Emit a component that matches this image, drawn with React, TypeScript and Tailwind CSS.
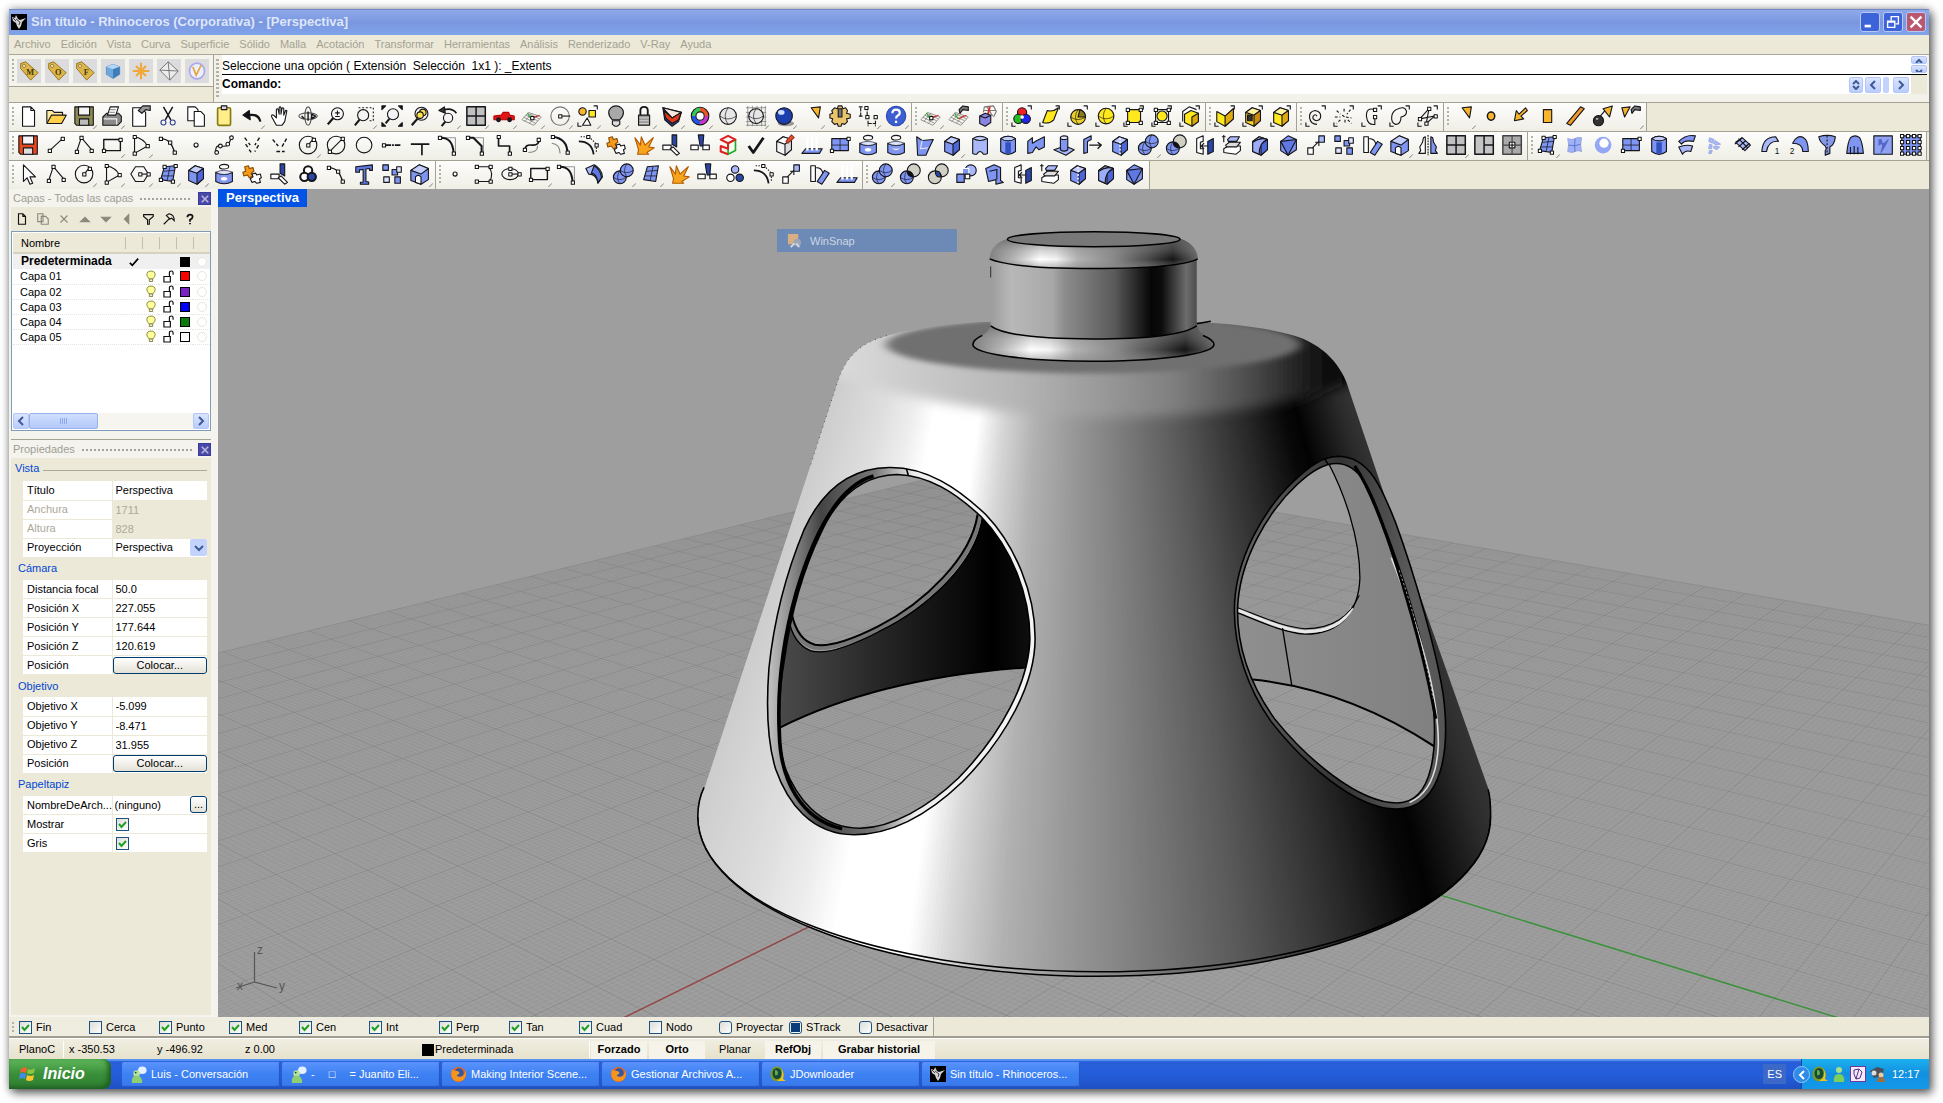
import React, { type ReactNode } from "react";

/* ---------- toolbar icons (24 x 24 boxes) ---------- */

const sq = (x: number, y: number, fill = "#fff") => (
  <rect key={`${x}-${y}`} x={x - 1.5} y={y - 1.5} width="3.5" height="3.5" fill={fill} stroke="#111" strokeWidth="1.1" />
);

const cube = (front: string, top: string, side: string) => (
  <>
    <path d="M4 8l7-5 9 3v11l-7 6-9-4z" fill={front} />
    <path d="M4 8l7-5 9 3-7 5z" fill={top} />
    <path d="M13 11l7-5v11l-7 6z" fill={side} />
  </>
);

const ball = (cx: number, cy: number, r: number, fill: string) => (
  <>
    <circle cx={cx} cy={cy} r={r} fill={fill} />
    <path d={`M${cx - r} ${cy}q${r} ${r * 0.7} ${r * 2} 0M${cx} ${cy - r}q${-r * 0.7} ${r} 0 ${r * 2}`} strokeWidth=".7" />
  </>
);

const corners = <path d="M18 1h4v4M1 19v4h4" />;
const BLUE = "#7f95f2";
const PALE = "#a9b8f8";
const NAVY = "#2c46a8";
const GOLD = "#f7b52c";
const YEL = "#ffe81c";

const lens = (
  <>
    <circle cx="13.5" cy="9.5" r="6.5" fill="#f7f7f7" />
    <path d="M9 14l-6 7" strokeWidth="2.4" />
  </>
);
const bluegrid = (
  <>
    <path d="M8 4l12-1-3 17-13-2z" fill={BLUE} />
    <path d="M14 4l-3 15M7 9l12-1M5 14l13 0" strokeWidth=".8" />
  </>
);
const floor = (
  <>
    <path d="M8 8l14 5-8 9-13-6zM5 11l13 6M12 9l-8 9M17 11l-8 9M3 13l13 7M7 9l13 6" stroke="#777" strokeWidth=".8" />
    <path d="M11 15l9-4" stroke="#d22" />
    <path d="M11 15l-4-6" stroke="#2a2" />
  </>
);
const hand = <path d="M12 5l4-4 6 1v4l-6-1-3 4z" fill="#777" />;
const cone = <path d="M11 3l10-1-2 12z" fill={GOLD} />;
const bowl = (
  <>
    <path d="M3 10v10q9 5 18 0V10q-9 5-18 0z" fill={BLUE} />
    <path d="M3 10q9-4 18 0-9 5-18 0" fill="#dfe5ff" strokeWidth=".7" />
    <ellipse cx="12" cy="4" rx="5" ry="2.5" fill="#fff" />
  </>
);

const ICONS: Record<string, ReactNode> = {
  Nuevo: <path d="M6 2h9l4 4v17H6zM15 2v4h4" fill="#fff" />,
  Abrir: (
    <>
      <path d="M2 19V6h6l2 2h9v4" fill="#ffe9a0" />
      <path d="M2 20l5-9h16l-5 9z" fill="#ffcf4a" />
    </>
  ),
  Guardar: (
    <>
      <path d="M2 2h20v20H4l-2-2z" fill="#8d8a52" />
      <path d="M6 2h12v9H6z" fill="#f4f4f4" />
      <path d="M7 15h10v7H7z" fill="#bbb" />
    </>
  ),
  GuardarRojo: (
    <>
      <path d="M2 2h20v20H4l-2-2z" fill="#e5491b" />
      <path d="M6 2h12v9H6z" fill="#f4f4f4" />
      <path d="M7 15h10v7H7z" fill="#ddd" />
    </>
  ),
  Imprimir: (
    <>
      <path d="M2 13l4-4h13l3 3v6l-4 4H2z" fill="#8a8a8a" />
      <path d="M7 11l3-9h9l-3 9z" fill="#fff" />
      <path d="M10 5h6M9 8h6" stroke="#999" />
      <path d="M3 15h14v6" stroke="#f0f0f0" />
    </>
  ),
  Propiedades: (
    <>
      <path d="M4 3h9l5 5v15H4z" fill="#fff" />
      <path d="M10 6l5-5h8v5l-5-1-4 4z" fill="#999" />
    </>
  ),
  Cortar: (
    <>
      <path d="M7 2l8 14M17 2L9 16" strokeWidth="1.6" />
      <circle cx="7" cy="19" r="2.7" stroke="#2c3f8f" />
      <circle cx="17" cy="19" r="2.7" stroke="#2c3f8f" />
    </>
  ),
  Copiar: (
    <>
      <path d="M3 2h8l3 3v12H3z" fill="#fff" />
      <path d="M10 7h7l4 4v12H10z" fill="#fff" />
    </>
  ),
  Pegar: (
    <>
      <rect x="5" y="3" width="14" height="19" rx="1.5" fill="#ffee8a" stroke="#8a7a10" strokeWidth="1.8" />
      <rect x="9" y="1" width="6" height="4" fill="#ddd" />
    </>
  ),
  Deshacer: (
    <>
      <path d="M21 18q-2-9-13-7" strokeWidth="2.4" />
      <path d="M9 6l-7 5 8 5z" fill="#111" />
    </>
  ),
  Encuadre: <path d="M8 22l-5-9q-1-3 2-2l3 3V5q1-2 2 0l1 5V3q1-2 2 0v7l1-6q1-2 2 0v7l2-5q2-1 1 2l-2 10-3 4z" fill="#fff" />,
  Rotar: (
    <>
      <ellipse cx="12" cy="12" rx="10" ry="3.5" stroke="#555" />
      <ellipse cx="12" cy="12" rx="3.5" ry="10" stroke="#555" />
      <path d="M12 7v10M16 10l4 2-4 3zM8 15l-3-3" strokeWidth="1.500" />
    </>
  ),
  Zoom: (
    <>
      {lens}
      <path d="M11 8.500h5M13.500 6v5M11 12.500h5" />
    </>
  ),
  ZoomVentana: (
    <>
      <path d="M6 3h16v14h-6" strokeDasharray="2 2" />
      <circle cx="11" cy="11" r="6" fill="#f4f4f4" />
      <path d="M7 16l-5 6" strokeWidth="2.2" />
    </>
  ),
  ZoomExtension: (
    <>
      <circle cx="13" cy="10" r="6" fill="#f4f4f4" />
      <path d="M9 15l-4 5" strokeWidth="2.2" />
      <path d="M1 1h4L1 5zM23 1v4l-4-4zM23 23h-4l4-4zM1 23v-4l4 4z" fill="#111" />
    </>
  ),
  ZoomSeleccion: (
    <>
      <circle cx="13.500" cy="9.500" r="7" fill="#f4f4f4" />
      <circle cx="15" cy="8" r="3.500" fill="#ffe14a" />
      <circle cx="12" cy="11" r="3.500" fill="#ffe14a" />
      <path d="M9 15l-6 7" strokeWidth="2.4" />
    </>
  ),
  ZoomPrevio: (
    <>
      <circle cx="12" cy="14" r="5" fill="#f4f4f4" />
      <path d="M9 18l-4 5" strokeWidth="2.2" />
      <path d="M21 9q-4-6-13-4" strokeWidth="1.800" />
      <path d="M8 2L2 6l7 3z" fill="#333" />
    </>
  ),
  CuatroVistas: (
    <>
      <rect x="2" y="2" width="20" height="20" fill="#c0c0c0" strokeWidth="1.600" />
      <path d="M12 2v20M2 12h20" strokeWidth="1.600" />
    </>
  ),
  TresVistas: (
    <>
      <rect x="2" y="2" width="20" height="20" fill="#c4c4c4" strokeWidth="1.600" />
      <path d="M12 2v20M12 12h10" strokeWidth="1.600" />
    </>
  ),
  PlanoVista: (
    <>
      <rect x="2" y="2" width="20" height="20" fill="#aaa" stroke="#444" strokeWidth="1.600" />
      <path d="M12 2v20M2 12h20" stroke="#444" />
      <rect x="9" y="9" width="6" height="6" fill="#fff" />
      <path d="M12 10v4M10 12h4" />
    </>
  ),
  Coche: (
    <>
      <path d="M1 16v-4l8-1 2-3h6l1 3 5 1v4z" fill="#e01818" stroke="#b00" />
      <circle cx="6" cy="16" r="2" fill="#222" />
      <circle cx="18" cy="16" r="2" fill="#222" />
    </>
  ),
  PlanoC: (
    <>
      {floor}
      {sq(12, 14)}
    </>
  ),
  PlanoMano: (
    <>
      {floor}
      {hand}
    </>
  ),
  PlanoCubo: (
    <>
      <path d="M9 2l10-1 3 6-3 6M12 2l6 10M9 6h12M9 2l-1 6" stroke="#777" />
      <path d="M15 2l-2 8" stroke="#d22" strokeWidth="2" />
      <path d="M4 12l6-3 6 2v8l-6 4-6-3z" fill="#8a86e0" />
      <path d="M4 12l6 2 6-3" />
    </>
  ),
  CirculoC: (
    <>
      <circle cx="12" cy="12" r="10" stroke="#777" />
      <path d="M12 12h11" />
      {sq(12, 12)}
    </>
  ),
  SeleccionObj: (
    <>
      <circle cx="6" cy="7" r="4" fill={GOLD} />
      <rect x="13" y="6" width="7" height="7" fill={YEL} />
      <path d="M11 14l4 8H6z" fill="#fff" />
      {corners}
    </>
  ),
  Bombilla: (
    <>
      <path d="M8 16q-4-4-4-8a8 7 0 0116 0q0 4-4 8z" fill="#a8a8a8" />
      <path d="M8 17h8v4l-3 2h-2l-3-2z" fill="#ddd" />
    </>
  ),
  Bloquear: (
    <>
      <path d="M8 11V6q0-4 4-4t4 4v5" strokeWidth="2" />
      <rect x="6" y="11" width="12" height="11" fill="#999" />
      <path d="M7 14h10M7 17h10M7 20h10" stroke="#e4e4e4" strokeWidth=".8" />
    </>
  ),
  Capas: (
    <>
      <path d="M2 3l20 5-3 10-7 5-8-7z" fill="#2c3f8f" />
      <path d="M2 3l20 5-10 6z" fill="#f9e9dc" />
      <path d="M3 6l9 8 10-6-3 8-7 4-7-6z" fill="#e33a1a" />
    </>
  ),
  Color: (
    <>
      <g strokeWidth="4.500">
        <path d="M12 5a7 7 0 017 7" stroke="#e52" />
        <path d="M19 12a7 7 0 01-7 7" stroke="#c3c" />
        <path d="M12 19a7 7 0 01-7-7" stroke="#25e" />
        <path d="M5 12a7 7 0 017-7" stroke="#3c5" />
      </g>
      <circle cx="12" cy="12" r="9.500" />
      <circle cx="12" cy="12" r="4.500" fill="#fff" />
    </>
  ),
  Esfera: ball(12, 12, 9, "#e6e6e6"),
  EsferaMalla: (
    <>
      <path d="M3 1v22M8 1v22M13 1v22M18 1v22M22 1v22M1 3h22M1 8h22M1 13h22M1 18h22M1 22h22" stroke="#777" strokeWidth=".8" />
      {ball(12, 12, 8, "#e6e6e6")}
    </>
  ),
  EsferaAzul: (
    <>
      <ellipse cx="14" cy="20" rx="9" ry="3" fill="#999" stroke="none" />
      <circle cx="12" cy="12" r="9" fill="#1d3fae" />
      <ellipse cx="9" cy="8" rx="3.500" ry="2.500" fill="#cfe0ff" stroke="none" />
    </>
  ),
  Foco: cone,
  Opciones: (
    <>
      <path d="M10 1h4l1 3 3-1 2 3-1 3 4 1v4l-4 1 1 3-3 3-3-1-1 3h-3l-1-3-3 1-3-3 1-3-3-1v-4l3-1-1-3 3-3 3 1z" fill="#e9c46a" />
      <rect x="10" y="4" width="4" height="9" fill="#777" />
    </>
  ),
  Cotas: (
    <>
      <path d="M4 3v9M2 2h5M2 12h5M12 20h8M12 17v6M20 17v6M11 2v10" strokeDasharray="4 1" />
      {[sq(10, 3), sq(11, 13), sq(20, 13)]}
    </>
  ),
  Ayuda: (
    <>
      <circle cx="12" cy="12" r="10.500" fill="#3c5ed2" stroke="#2a48ac" />
      <path d="M8 9q0-4 4-4t4 3.500q0 2-2 3t-2 3M12 17v2.500" stroke="#fff" strokeWidth="2.400" />
    </>
  ),
  RGB: (
    <>
      <circle cx="12" cy="8" r="5" fill="#e22" />
      <circle cx="8" cy="15" r="5" fill="#2b2" />
      <circle cx="16" cy="15" r="5" fill="#22e" />
      <circle cx="12" cy="13" r="2" fill="#fff" stroke="none" />
      {corners}
    </>
  ),
  SelSuperficie: (
    <>
      <path d="M9 6q6 2 12-3l-5 13q-5 5-12 3z" fill={YEL} />
      {corners}
    </>
  ),
  SelPoli: (
    <>
      {ball(12, 13, 8, "#ecd02a")}
      <path d="M12 13l2-8q6 2 6 8z" fill="#8a7a20" />
      {corners}
    </>
  ),
  SelEsfera: (
    <>
      {ball(12, 12, 8.500, YEL)}
      {corners}
    </>
  ),
  SelRect: (
    <>
      <rect x="5" y="5" width="14" height="14" fill={YEL} />
      {[sq(5, 5), sq(19, 5), sq(5, 19), sq(19, 19)]}
      {corners}
    </>
  ),
  SelCirculo: (
    <>
      <rect x="5" y="5" width="14" height="14" />
      <circle cx="12" cy="12" r="5.500" fill={YEL} />
      {[sq(5, 5), sq(19, 5), sq(5, 19), sq(19, 19)]}
      {corners}
    </>
  ),
  SelCaja: (
    <>
      <path d="M4 18V7l7-5 8 3" fill="#fff" />
      <path d="M6 10l7-4 8 3v9l-7 5-8-4z" fill={YEL} />
      <path d="M14 13l7-4v9l-7 5z" fill="#d9a80c" />
      {corners}
    </>
  ),
  Esquina: (
    <>
      <path d="M3 7l9 5 9-8v11l-9 8-9-5z" fill={YEL} />
      <path d="M12 12l9-8v11l-9 8z" fill="#e0ab10" />
      {corners}
    </>
  ),
  CajaAbierta: (
    <>
      {cube("#ffd62a", "#fff09a", "#c98a10")}
      <rect x="6" y="11" width="5" height="6" fill="#333" />
      {corners}
    </>
  ),
  CajaAmarilla: (
    <>
      {cube(YEL, "#fff7a0", "#e0ab10")}
      {corners}
    </>
  ),
  Espiral: (
    <>
      <path d="M13 12q-2-3-4 0t3 5q5 0 5-5t-6-6q-7 1-6 8t8 7" />
      {corners}
    </>
  ),
  Rayos: (
    <>
      <path d="M4 6l4 4M12 4v4M19 5l-4 5M2 13h6M14 13l6 1M8 16l-4 4M13 16v5M16 16l4 4M10 11l4 3" strokeDasharray="3 2" />
      {corners}
    </>
  ),
  CurvaAbierta: (
    <>
      <path d="M15 5Q5 2 6 13q1 9 9 8v-8" />
      {[sq(15, 5), sq(15, 13)]}
      {corners}
    </>
  ),
  CurvaCerrada: (
    <>
      <path d="M8 5q9-5 11 2 0 5-6 6 0 8-6 8-5-2-4-9 1-5 5-7z" />
      {corners}
    </>
  ),
  CurvaPuntos: (
    <>
      <path d="M3 15L13 4l-3 16 9-8-16 3" />
      {[sq(3, 15), sq(13, 4), sq(10, 20), sq(20, 12)]}
      {corners}
    </>
  ),
  LuzPunto: <ellipse cx="12" cy="12" rx="4" ry="4.500" fill={GOLD} strokeWidth="1.600" />,
  LuzDir: <path d="M19 3l2 3-7 6 3 3-10 2 2-11 3 4z" fill={GOLD} />,
  LuzRect: <rect x="8" y="5" width="9" height="14" fill={GOLD} />,
  LuzLineal: <path d="M3 20L18 2l4 2L7 22z" fill="#f09a2c" />,
  Bomba: (
    <>
      <circle cx="7" cy="17" r="5.500" fill="#333" />
      <circle cx="5.500" cy="15" r="1.300" fill="#aaa" stroke="none" />
      <path d="M9 12l5-6" />
      <path d="M12 4l10-3-3 12z" fill={GOLD} />
    </>
  ),
  FocoMano: (
    <>
      <path d="M2 3l9-1-6 11z" fill={GOLD} />
      {hand}
    </>
  ),
  Linea: (
    <>
      <path d="M5 18L19 5" />
      {[sq(5, 18), sq(19, 5)]}
    </>
  ),
  Polilinea: (
    <>
      <path d="M4 19L9 4l12 14" />
      {[sq(4, 19), sq(9, 4), sq(20, 18)]}
    </>
  ),
  Rectangulo: (
    <>
      <rect x="3" y="6" width="18" height="12" strokeWidth="1.500" />
      {[sq(3, 18), sq(21, 6)]}
    </>
  ),
  Sector: (
    <>
      <path d="M6 3v18l14-8M6 3q10 2 14 10" />
      {[sq(6, 3), sq(6, 21), sq(20, 13)]}
    </>
  ),
  Arco: (
    <>
      <path d="M4 5q11 0 15 15" strokeWidth="1.500" />
      {[sq(4, 5), sq(14, 9), sq(19, 20)]}
    </>
  ),
  Punto: <circle cx="12" cy="12" r="2.200" fill="#fff" />,
  CurvaInterp: (
    <>
      <path d="M3 20q-1-8 5-7t8-1 4-9" />
      <g fill="#fff">
        <circle cx="4" cy="20" r="2" />
        <circle cx="8" cy="13" r="2" />
        <circle cx="16" cy="11" r="2" />
        <circle cx="20" cy="4" r="2" />
      </g>
    </>
  ),
  CurvaRotaA: <path d="M4 4l6 8M20 4l-5 8M5 11l6 9M19 12l-4 7" strokeDasharray="4 3" strokeWidth="1.500" />,
  CurvaRotaB: <path d="M4 6l6 7M19 5l-5 9M8 19h9" strokeDasharray="4 2" strokeWidth="1.500" />,
  Circulo: (
    <>
      <circle cx="12" cy="12" r="9.500" />
      <path d="M12 12l5-6" />
      {[sq(12, 12), sq(18, 6)]}
    </>
  ),
  CirculoDiam: (
    <>
      <circle cx="12" cy="12" r="9.500" />
      <path d="M5 19L19 5" />
      {[sq(5, 19), sq(19, 5)]}
    </>
  ),
  Elipse: <circle cx="12" cy="12" r="8.500" />,
  ElipseEje: (
    <>
      <ellipse cx="11" cy="12" rx="9" ry="6" />
      <path d="M11 12h10" />
      {[sq(11, 12), sq(21, 12), sq(11, 6)]}
    </>
  ),
  Extender: (
    <>
      <path d="M3 12h18" strokeWidth="1.800" strokeDasharray="8 1 2 1" />
      {sq(3, 12)}
    </>
  ),
  Recortar: <path d="M2 11h20M14 11v12" strokeWidth="1.800" />,
  Empalme: (
    <>
      <path d="M3 4h17v17" stroke="#999" />
      <path d="M3 4q14-1 15 17" strokeWidth="2.200" />
      {[sq(3, 4), sq(18, 21)]}
    </>
  ),
  Chaflan: (
    <>
      <path d="M3 4h17v17" stroke="#999" />
      <path d="M3 4h6l9 9v8" strokeWidth="2.200" />
      {[sq(3, 4), sq(18, 21)]}
    </>
  ),
  Conectar: (
    <>
      <path d="M6 3v10h12v8" strokeWidth="1.800" />
      {[sq(6, 3), sq(18, 21)]}
    </>
  ),
  Mezclar: (
    <>
      <path d="M4 18q0-7 8-6t8-8" strokeWidth="1.800" />
      <path d="M8 20q10 0 10-7" stroke="#888" />
      {[sq(4, 17), sq(19, 6)]}
    </>
  ),
  Desfase: (
    <>
      <path d="M4 3q16 2 16 18" strokeWidth="2.200" />
      <path d="M3 10q9 1 9 11" stroke="#888" />
      {[sq(4, 3), sq(20, 20)]}
    </>
  ),
  Reconstruir: (
    <>
      <path d="M2 8q14 0 16 14" strokeWidth="2" />
      <path d="M4 3h9l8 8v9" strokeDasharray="1.500 1.500" />
      {[sq(12, 3), sq(21, 12)]}
    </>
  ),
  Explotar: (
    <>
      <path d="M4 4l4-1 1 3 4-1 1 4-3 2 2 3-4 2-2-3-4 1-1-4 3-1z" fill="#f39a1a" stroke="#8a4a00" />
      <path d="M12 12l4-1 1 2 4-1 1 4-2 1 1 4-4 1-2-2-3 1-2-4 3-2z" fill="#fff" />
    </>
  ),
  Detonar: <path d="M2 4l6 8 1-9 4 9 9-8-5 10 6 1-8 5 2 2H5l1-5z" fill="#f7a51c" stroke="#b45a00" />,
  Ajustar: (
    <>
      <path d="M2 12h9v5H2z" fill="#fff" />
      <path d="M12 1h5v13l-5-3z" fill={NAVY} />
      <path d="M13 14l7 7-3 2-7-7z" fill="#fff" />
    </>
  ),
  Partir: (
    <>
      <path d="M2 12h8v5H2zM15 12h7v5h-7z" fill="#fff" />
      <path d="M10 1h6l-1 12h-3z" fill={NAVY} />
    </>
  ),
  CajaRoja: (
    <>
      <path d="M20 6v12l-8 4V10z" stroke="#2a2" strokeWidth="1.800" fill="#f4fff4" />
      <path d="M12 10L4 6l8-4 8 4-8 4v6l-8-3v6l8 3" stroke="#d22" strokeWidth="2.200" />
    </>
  ),
  Comprobar: <path d="M4 13l5 7L20 4" strokeWidth="3" />,
  CajaLapiz: (
    <>
      {cube("#f4f4f4", "#fff", "#ddd")}
      <path d="M14 8l6-7 3 3-7 6z" fill="#e2521a" stroke="#933" />
    </>
  ),
  Proyeccion: (
    <>
      <path d="M5 16h18l-3 5H1z" fill={BLUE} />
      <path d="M7 3v15M12 3v15M17 3v15" stroke="#fff" strokeWidth="2.500" />
    </>
  ),
  SuperficiePuntos: (
    <>
      <rect x="3" y="5" width="18" height="13" fill={BLUE} />
      <path d="M12 5v13M3 12h18" strokeWidth=".8" />
      {[sq(3, 18), sq(21, 5)]}
    </>
  ),
  Revolucion: (
    <>
      {bowl}
      <ellipse cx="12" cy="17" rx="4" ry="2.500" fill="#fff" stroke="#8a9bea" />
    </>
  ),
  Tazon: (
    <>
      {bowl}
      <path d="M5 14q7 8 14 0-7 3-14 0" fill="#fff" stroke="#8a9bea" />
    </>
  ),
  Plegado: (
    <>
      <path d="M4 3l6 4 12-1-4 8-4 9H5z" fill={BLUE} />
      <path d="M10 7l-2 9 8-1" stroke="#dfe5ff" />
    </>
  ),
  Cubo: cube(BLUE, "#c3cefc", "#4c66d8"),
  CuboSeccion: (
    <>
      {cube(BLUE, "#c3cefc", "#4c66d8")}
      <path d="M12 4v18" stroke="#fff" strokeDasharray="2 2" strokeWidth="1.500" />
    </>
  ),
  CuboEmpalme: (
    <>
      {cube(BLUE, "#c3cefc", "#4c66d8")}
      <path d="M4 19V9q8-6 16-3-9 3-9 16z" fill="#9cadf7" />
    </>
  ),
  Prisma: (
    <>
      <path d="M4 8l8-6 9 4v11l-9 6-8-5z" fill={BLUE} />
      <path d="M4 8l8 15 9-17z" fill="#6078e4" />
    </>
  ),
  Cilindro: (
    <>
      <path d="M4 5q8-5 16 0v16q-4 2-5 0-3-4-6 0-1 2-5 0z" fill={PALE} />
      <path d="M4 5q8 4 16 0" fill="#dfe5ff" />
    </>
  ),
  CilindroB: (
    <>
      <path d="M4 5q8-5 16 0v14q-8 6-16 0z" fill={BLUE} />
      <path d="M4 5q8 5 16 0-8-5-16 0" fill="#c3cefc" />
      <path d="M9 9v12h6V9z" fill="#3350c0" stroke="none" />
    </>
  ),
  Onda: <path d="M3 8l5-4v6l5-3 8-4v11l-6 3-3-3-4 6-5 1z" fill={BLUE} />,
  Sombrero: (
    <>
      <path d="M1 17l12-4 10 4-9 6z" fill={PALE} />
      <path d="M8 4v13q4 3 8 0V4" fill={BLUE} />
      <ellipse cx="12" cy="4" rx="4" ry="2" fill="#dfe5ff" />
    </>
  ),
  Puerta: (
    <>
      <path d="M3 21V6l8-4v4l-4 2v12z" fill={BLUE} />
      <path d="M9 12h13M18 9l4 3-4 4" strokeWidth="1.400" />
    </>
  ),
  Union: (
    <>
      {ball(8.500, 15.500, 7, BLUE)}
      {ball(16, 8, 7, BLUE)}
    </>
  ),
  Diferencia: (
    <>
      <circle cx="16" cy="8" r="7" fill="#cfcfc4" />
      {ball(8.500, 15.500, 7, BLUE)}
      <path d="M9 9q0 6 6.500 6-1-6-6.500-6" fill="#111" />
    </>
  ),
  Interseccion: (
    <>
      <circle cx="16" cy="8" r="7" fill="#cfcfc4" />
      <circle cx="8.500" cy="15.500" r="7" fill="#cfcfc4" />
      <path d="M9 9q6-1 6 6-6 1-6-6" fill={NAVY} />
    </>
  ),
  Division: (
    <>
      <circle cx="17" cy="8" r="6" fill={PALE} />
      <path d="M8 6h7v8H8z" fill={BLUE} stroke="#fff" />
      <path d="M2 12h8v9H2z" fill={BLUE} />
      <path d="M11 12h5v5h-5z" fill="#fff" />
    </>
  ),
  Vaciado: (
    <>
      <path d="M3 6l9-4 7 3v14l3 2-8 2v-5l-8 2z" fill={BLUE} />
      <path d="M7 9l8-2v11" />
    </>
  ),
  Tope: (
    <>
      <path d="M4 20V5l7-3v6l-3 1v7h3v6z" fill="#fff" />
      <path d="M16 8l6-3v14l-6 3z" fill={NAVY} />
      <path d="M16 13h-7M12 10l-3 3 3 3" />
    </>
  ),
  Hojas: (
    <>
      <path d="M3 16l5-3h13v5l-5 4-13-2z" fill="#fff" />
      <path d="M5 12l4-3h12l-4 5H6z" fill="#ddd" />
      <path d="M7 6l3-3h10l-3 5H8z" fill={PALE} />
      <path d="M3 1v8M1 3h4" />
    </>
  ),
  Mover: (
    <>
      <rect x="3" y="15" width="6" height="7" fill="#fff" />
      <rect x="15" y="2" width="6" height="7" fill={PALE} />
      <path d="M8 15l7-7M11 9h4v4" />
    </>
  ),
  Matriz: (
    <>
      <path d="M2 2h6v6H2zM12 7h6v6h-6zM15 15h6v7h-6z" fill={BLUE} />
      <path d="M3 15h6v6H3zM17 4h5v6h-5z" fill="#dfe5ff" />
    </>
  ),
  Girar: (
    <>
      <path d="M3 3h5v17H3z" fill="#fff" />
      <path d="M18 8l5 3-8 12-5-3z" fill={BLUE} />
      <path d="M9 5q6 0 7 6" />
    </>
  ),
  Jaula: (
    <>
      <path d="M2 8l9-6 10 4v12l-8 5-11-4z" fill={BLUE} />
      <path d="M2 8l9-6 10 4-8 6z" fill="#c3cefc" />
      <path d="M7 21v-6q3-3 6 0v8z" fill="#fff" />
    </>
  ),
  Simetria: (
    <>
      <path d="M9 3v18H2l2-3-1-4 3-5 1-5z" fill="#fff" />
      <path d="M15 3v18h7l-2-3 1-4-3-5-1-5z" fill={BLUE} />
      <path d="M12 1v22" strokeDasharray="2 1" />
    </>
  ),
  Parche: (
    <>
      {bluegrid}
      {[sq(8, 4), sq(20, 3), sq(4, 18), sq(17, 20)]}
    </>
  ),
  Malla: bluegrid,
  Almohada: (
    <g stroke="#8797dc" strokeWidth=".8">
      <path d="M4 5q5 2 8 0t7-1q-2 8 0 15-4-2-7 0t-8 0q2-8 0-14z" fill="#9fb2f8" />
      <path d="M5 12q7 2 13-1M12 5q-1 7 0 14" stroke="#4c62c0" />
    </g>
  ),
  Toro: (
    <g stroke="none">
      <circle cx="12" cy="12" r="9" fill="#93a7f4" />
      <circle cx="13" cy="10" r="5" fill="#fff" />
    </g>
  ),
  Banda: (
    <>
      <path d="M3 8q8-8 18-6l-2 6Q9 6 6 11z" fill={BLUE} />
      <path d="M3 14q8-3 15-1l-2 6q-6-2-9 3z" fill={PALE} />
    </>
  ),
  BandaRecta: (
    <>
      <path d="M2 6l9-4q8 4 9 13l-5 7q-1-10-10-10z" fill={PALE} />
      <path d="M11 3q7 4 8 13l-4 5q-1-9-7-10z" fill="#5f78e0" />
    </>
  ),
  Abanico: <path d="M6 4l5 2-2 4-4-2zM12 7l6 4-5 1-3-2zM6 11l3 1-1 4H5zM11 13l6 1-3 3-4-2zM6 18l3 0-1 3H5z" fill={PALE} stroke="#8797dc" strokeWidth=".7" />,
  Red: (
    <>
      <path d="M4 9l7-5 9 8-6 6z" fill={PALE} />
      <path d="M7 5l10 10M3 11l8-7M7 14l8-7M11 17l8-7" strokeWidth="1.300" />
    </>
  ),
  Barrido1: (
    <>
      <path d="M2 19Q3 3 17 3l3 5Q9 7 7 19z" fill={PALE} />
      <text x="16" y="22" fontSize="9" fill="#111" stroke="none" fontFamily="Liberation Sans, sans-serif">1</text>
    </>
  ),
  Barrido2: (
    <>
      <path d="M5 10q5-10 12-6 5 3 5 15h-6q0-9-11-9z" fill={BLUE} />
      <text x="2" y="22" fontSize="9" fill="#111" stroke="none" fontFamily="Liberation Sans, sans-serif">2</text>
    </>
  ),
  Jarron: (
    <>
      <path d="M3 3q9-3 18 0-1 9-6 11v7l-5 2v-5q2-2 0-5-6-4-7-10z" fill="#8598e8" />
      <path d="M12 2v20" strokeDasharray="2 2" />
    </>
  ),
  Drapeado: (
    <>
      <path d="M3 21q1-12 4-17 5-4 10 0 3 5 4 17z" fill={BLUE} />
      <path d="M7 22v-8M11 22v-9M15 22v-8" />
    </>
  ),
  Relieve: (
    <>
      <rect x="2" y="2" width="20" height="20" fill="#8fa2f2" />
      <path d="M7 6q4-2 4 2t5-1-2 7-4 3-3-4z" fill="#5167c8" stroke="none" />
    </>
  ),
  PuntosControl: (
    <>
      <rect x="2" y="2" width="20" height="20" fill={BLUE} />
      {[2, 8.5, 15, 21].flatMap((x) => [2, 8.5, 15, 21].map((y) => sq(x, y)))}
    </>
  ),
  Cursor: <path d="M7 2v18l4-4 3 7 3-1-3-7h6z" fill="#fff" />,
  Poligono: (
    <>
      <path d="M7 4h9l5 8-5 8H7l-5-8z" />
      <path d="M12 12h9" />
      {[sq(12, 12), sq(21, 12)]}
    </>
  ),
  Grupo: (
    <g strokeWidth="2.200">
      <circle cx="12" cy="8" r="4.500" fill="#fff" />
      <circle cx="8" cy="15" r="4.500" fill="#fff" />
      <circle cx="16" cy="15" r="4.500" fill={NAVY} />
    </g>
  ),
  Bolas: (
    <>
      <circle cx="12" cy="7" r="4" fill={PALE} />
      <circle cx="7" cy="16" r="4" fill="#fff" />
      <circle cx="17" cy="16" r="4" fill={NAVY} />
    </>
  ),
  Texto: <path d="M3 4l18-2v6h-3V6l-4 .5V20l3 .5V23H8v-2l3-.5V7l-4 .5V10H3z" fill="#5f78e0" />,
  CurvaCtrl: (
    <>
      <path d="M4 4h14q6 8 1 16H6" />
      {[sq(5, 4), sq(20, 4), sq(20, 20), sq(5, 20)]}
    </>
  ),
};

const ROWS: string[][][] = [
  [
    ["Nuevo", "Abrir", "Guardar", "Imprimir", "Propiedades", "Cortar", "Copiar", "Pegar", "Deshacer", "Encuadre", "Rotar", "Zoom", "ZoomVentana", "ZoomExtension", "ZoomSeleccion", "ZoomPrevio", "CuatroVistas", "Coche", "PlanoC", "CirculoC", "SeleccionObj", "Bombilla", "Bloquear", "Capas", "Color", "Esfera", "EsferaMalla", "EsferaAzul", "Foco", "Opciones", "Cotas", "Ayuda"],
    ["PlanoC", "PlanoMano", "PlanoCubo"],
    ["RGB", "SelSuperficie", "SelPoli", "SelEsfera", "SelRect", "SelCirculo", "SelCaja"],
    ["Esquina", "CajaAbierta", "CajaAmarilla"],
    ["Espiral", "Rayos", "CurvaAbierta", "CurvaCerrada", "CurvaPuntos"],
    ["Foco", "LuzPunto", "LuzDir", "LuzRect", "LuzLineal", "Bomba", "FocoMano"],
  ],
  [
    ["GuardarRojo", "Linea", "Polilinea", "Rectangulo", "Sector", "Arco", "Punto", "CurvaInterp", "CurvaRotaA", "CurvaRotaB", "Circulo", "CirculoDiam", "Elipse", "Extender", "Recortar", "Empalme", "Chaflan", "Conectar", "Mezclar", "Desfase", "Reconstruir", "Explotar", "Detonar", "Ajustar", "Partir", "CajaRoja", "Comprobar", "CajaLapiz", "Proyeccion", "SuperficiePuntos", "Revolucion", "Tazon", "Plegado", "Cubo", "Cilindro", "CilindroB", "Onda", "Sombrero", "Puerta", "CuboSeccion", "Union", "Diferencia", "Tope", "Hojas", "CuboEmpalme", "Prisma", "Mover", "Matriz", "Girar", "Jaula", "Simetria", "CuatroVistas", "TresVistas", "PlanoVista"],
    ["Parche", "Almohada", "Toro", "SuperficiePuntos", "CilindroB", "Banda", "Abanico", "Red", "Barrido1", "Barrido2", "Jarron", "Drapeado", "Relieve", "PuntosControl"],
  ],
  [
    ["Cursor", "Polilinea", "Circulo", "Sector", "Poligono", "Parche", "Cubo", "Revolucion", "Explotar", "Ajustar", "Grupo", "Arco", "Texto", "Matriz", "Jaula"],
    ["Punto", "CurvaCtrl", "ElipseEje", "Rectangulo", "Empalme", "BandaRecta", "Union", "Malla", "Detonar", "Partir", "Bolas", "Reconstruir", "Mover", "Girar", "Proyeccion"],
    ["Union", "Diferencia", "Interseccion", "Division", "Vaciado", "Tope", "Hojas", "CuboSeccion", "CuboEmpalme", "Prisma"],
  ],
];

/* Tools that open a flyout carry a small slash in their lower right corner. */
const FLYOUTS = new Set(["Guardar", "Imprimir", "Deshacer", "ZoomVentana", "ZoomPrevio", "CuatroVistas", "Coche", "PlanoC", "CirculoC", "SeleccionObj", "Bombilla", "Bloquear", "Capas", "Color", "EsferaMalla", "EsferaAzul", "Foco", "Cotas", "Ayuda", "FocoMano", "Jaula", "Rectangulo", "Circulo", "Sector", "Poligono", "Parche", "Cubo", "Union", "Malla"]);

function Grip({ className = "" }: { className?: string }) {
  return <span aria-hidden className={`my-1 w-[2px] shrink-0 bg-[repeating-linear-gradient(to_bottom,#b4b2a6_0_2px,transparent_2px_4px)] ${className}`} />;
}

function ToolGroup({ names }: { names: string[] }) {
  return (
    <div className="flex h-7 min-w-0 border-r border-[#a5a294] bg-linear-to-b from-[#fdfdfc] to-[#efeee6]">
      <Grip className="mr-px ml-[3px]" />
      {names.map((name, i) => (
        <button key={name + i} type="button" aria-label={name} className="grid h-7 w-7 shrink-0 place-items-center">
          <svg viewBox="0 0 26 26" className="size-6" fill="none" stroke="#15151a" strokeWidth="1.200" strokeLinejoin="round">
            {ICONS[name]}
            {FLYOUTS.has(name) && <path d="M22 26l4-4" stroke="#777" strokeWidth="1" />}
          </svg>
        </button>
      ))}
    </div>
  );
}

/* ---------- perspective viewport ---------- */

type V3 = [number, number, number];
const CAM: V3 = [227.055, 177.644, 120.619];
const TGT: V3 = [-5.099, -8.471, 31.955];
const dot = (a: V3, b: V3) => a[0] * b[0] + a[1] * b[1] + a[2] * b[2];
const diff = TGT.map((v, i) => v - CAM[i]) as V3;
const dlen = Math.sqrt(dot(diff, diff));
const DIR = diff.map((v) => v / dlen) as V3;
const hl = Math.hypot(DIR[0], DIR[1]);
const RIGHT: V3 = [DIR[1] / hl, -DIR[0] / hl, 0];
const UP: V3 = [RIGHT[1] * DIR[2], -RIGHT[0] * DIR[2], RIGHT[0] * DIR[1] - RIGHT[1] * DIR[0]];

function segment(a: V3, b: V3): string {
  const view = (p: V3): V3 => {
    const r: V3 = [p[0] - CAM[0], p[1] - CAM[1], p[2] - CAM[2]];
    return [dot(r, RIGHT), dot(r, UP), dot(r, DIR)];
  };
  let p = view(a);
  let q = view(b);
  const near = 30;
  if (p[2] < near && q[2] < near) return "";
  const clip = (u: V3, v: V3): V3 => {
    const t = (near - u[2]) / (v[2] - u[2]);
    return [u[0] + (v[0] - u[0]) * t, u[1] + (v[1] - u[1]) * t, near];
  };
  if (p[2] < near) p = clip(p, q);
  if (q[2] < near) q = clip(q, p);
  const s = (v: V3) => `${(855.5 + (v[0] / v[2]) * 1725).toFixed(1)} ${(414 - (v[1] / v[2]) * 1725).toFixed(1)}`;
  return `M${s(p)}L${s(q)}`;
}

function gridPath(step: number, skip: number) {
  let d = "";
  for (let i = -200; i <= 200; i += step) {
    if (skip && i % skip === 0) continue;
    d += segment([i, -200, 0], [i, 200, 0]) + segment([-200, i, 0], [200, i, 0]);
  }
  return d;
}
const MINOR = gridPath(1, 10);
const MAJOR = gridPath(10, 0);

const STOPS: [number, number][] = [
  [0, 205], [0.1, 222], [0.16, 238], [0.2, 255], [0.285, 255], [0.33, 216], [0.39, 178], [0.46, 153], [0.53, 131], [0.655, 90], [0.785, 40], [0.86, 8], [0.885, 3], [0.93, 24], [0.97, 44], [1, 52],
];
function shade(t: number) {
  const k = STOPS.findIndex(([s]) => s >= t);
  if (k <= 0) return STOPS[0][1];
  const [t0, v0] = STOPS[k - 1];
  const [t1, v1] = STOPS[k];
  return Math.round(v0 + ((v1 - v0) * (t - t0)) / (t1 - t0));
}
const FACETS = Array.from({ length: 240 }, (_, i) => {
  const t = i / 240;
  const x = (f: number, y: number) => {
    const l = 300 - (y - 345) * 0.317;
    const r = 1280 + (y - 360) * 0.335;
    return l + (r - l) * f;
  };
  const v = shade(t);
  return { d: `M${x(t, 200)} 200L${x(1.2, 200)} 200L${x(1.2, 1540)} 1540L${x(t, 1540)} 1540Z`, c: `rgb(${v},${v},${v})` };
});

const BODY = "M46 1150L250 505L300 345C318 285 350 262 400 248C470 230 530 225 590 222L985 222C1060 226 1130 236 1170 248C1230 265 1268 310 1280 360L1345 560L1546 1150C1550 1168 1550 1185 1550 1205C1550 1379 1221 1521 800 1521C378 1521 34 1379 34 1205C34 1185 37 1168 46 1150Z";
const L_OUT = "M400 511C470 510 530 550 585 605C640 665 679 760 679 850C679 940 625 1045 540 1135C480 1195 410 1240 333 1240C250 1240 205 1175 183 1110C165 1050 165 980 170 910C180 810 205 715 237 635C270 560 320 512 400 511Z";
const L_IN = "M415 525C475 527 525 560 575 608C635 672 669 765 669 850C668 935 615 1040 532 1128C475 1185 405 1226 345 1227C265 1227 222 1165 200 1105C184 1050 188 960 200 890C212 800 235 715 270 640C300 572 345 527 415 525Z";
const R_OUT = "M1260 489C1320 490 1345 560 1368 620C1405 725 1445 870 1459 960C1472 1060 1463 1188 1370 1189C1290 1189 1190 1095 1130 1015C1085 950 1060 870 1060 795C1060 690 1120 590 1175 537C1205 508 1230 489 1260 489Z";
const R_IN = "M1255 503C1305 503 1325 570 1345 625C1385 730 1425 870 1438 960C1450 1065 1442 1176 1372 1177C1295 1177 1195 1085 1137 1010C1092 945 1066 870 1066 795C1068 695 1125 598 1180 545C1205 520 1230 503 1255 503Z";

function Scene() {
  return (
    <svg viewBox="0 0 1711 828" preserveAspectRatio="xMidYMid slice" className="absolute inset-0 h-full w-full" fill="none" aria-label="Vista en perspectiva">
      <defs>
        <linearGradient id="neck">
          <stop offset="0" stopColor="#9c9c9c" /><stop offset=".1" stopColor="#b8b8b8" /><stop offset=".3" stopColor="#a8a8a8" /><stop offset=".36" stopColor="#8c8c8c" /><stop offset=".6" stopColor="#5a5a5a" /><stop offset=".78" stopColor="#060606" /><stop offset=".83" stopColor="#0c0c0c" /><stop offset=".95" stopColor="#6c6c6c" /><stop offset="1" stopColor="#4c4c4c" />
        </linearGradient>
        <linearGradient id="ring">
          <stop offset="0" stopColor="#808080" /><stop offset=".12" stopColor="#b8b8b8" /><stop offset=".24" stopColor="#fff" /><stop offset=".32" stopColor="#f4f4f4" /><stop offset=".42" stopColor="#b4b4b4" /><stop offset=".6" stopColor="#888" /><stop offset=".76" stopColor="#4a4a4a" /><stop offset=".88" stopColor="#141414" /><stop offset="1" stopColor="#666" />
        </linearGradient>
        <linearGradient id="capShade" x1="0" y1="0" x2="0" y2="1">
          <stop offset="0" stopColor="#666" stopOpacity=".8" /><stop offset=".4" stopColor="#888" stopOpacity=".35" /><stop offset=".7" stopColor="#888" stopOpacity="0" /><stop offset="1" stopColor="#888" stopOpacity=".6" />
        </linearGradient>
        <linearGradient id="shoulder" gradientUnits="userSpaceOnUse" x1="290" y1="0" x2="1290" y2="0">
          <stop offset="0" stopColor="#dcdcdc" /><stop offset=".12" stopColor="#cfcfcf" /><stop offset=".35" stopColor="#b6b6b6" /><stop offset=".5" stopColor="#9c9c9c" /><stop offset=".65" stopColor="#808080" /><stop offset=".8" stopColor="#4c4c4c" /><stop offset=".92" stopColor="#161616" /><stop offset="1" stopColor="#000" />
        </linearGradient>
        <linearGradient id="darkwall">
          <stop offset="0" stopColor="#505050" /><stop offset=".4" stopColor="#262626" /><stop offset=".78" stopColor="#000" /><stop offset="1" stopColor="#181818" />
        </linearGradient>
        <linearGradient id="lightwall">
          <stop offset="0" stopColor="#8f8f8f" /><stop offset="1" stopColor="#7f7f7f" />
        </linearGradient>
        <linearGradient id="rimL">
          <stop offset="0" stopColor="#c4c4c4" /><stop offset=".2" stopColor="#444" /><stop offset=".4" stopColor="#777" /><stop offset=".55" stopColor="#eee" /><stop offset="1" stopColor="#f4f4f4" />
        </linearGradient>
        <linearGradient id="rimR">
          <stop offset="0" stopColor="#666" /><stop offset=".5" stopColor="#333" /><stop offset=".85" stopColor="#5c5c5c" /><stop offset="1" stopColor="#555" />
        </linearGradient>
        <filter id="soft" x="-20%" y="-50%" width="140%" height="200%"><feGaussianBlur stdDeviation="10 5" /></filter>
        <filter id="softer" x="-20%" y="-50%" width="140%" height="200%"><feGaussianBlur stdDeviation="14 12" /></filter>
        <clipPath id="bodyClip"><path d={BODY} /></clipPath>
        <clipPath id="leftClip"><path d={L_IN} /></clipPath>
        <clipPath id="rightClip"><path d={R_IN} /></clipPath>
        <mask id="holes" maskUnits="userSpaceOnUse" x="0" y="0" width="1700" height="1600">
          <rect width="1700" height="1600" fill="#fff" />
          <path d={L_IN} fill="#000" />
          <path d={R_IN} fill="#000" />
        </mask>
      </defs>

      <path d={MINOR} stroke="#707070" strokeOpacity=".24" strokeWidth=".5" />
      <path d={MAJOR} stroke="#6c6c6c" strokeOpacity=".34" strokeWidth="1" />
      <path d={segment([0, 0, 0], [200, 0, 0])} stroke="#94494c" strokeWidth="1.500" />
      <path d={segment([0, 0, 0], [0, 200, 0])} stroke="#3f923f" strokeWidth="1.500" />

      <g transform="translate(462 21) scale(.523 .5038)">
        <g clipPath="url(#leftClip)" stroke="#000" strokeWidth="2.500">
          <path d="M578 600C570 700 470 790 380 835C330 862 280 884 250 874C225 862 212 835 208 800L160 830V1040L190 1028C330 955 500 920 662 908L720 900V640L600 590Z" fill="url(#darkwall)" stroke="none" />
          <path d="M190 1028C330 955 500 920 662 908" strokeWidth="4" />
          <path d="M574 604C562 695 470 785 380 832C330 858 285 874 255 868C230 860 215 840 210 800" stroke="#777" strokeWidth="8" />
          <path d="M569 604C557 690 467 780 378 827C328 853 285 868 258 863C236 856 222 840 213 800" strokeWidth="4" />
          <path d="M579 606C570 700 470 792 380 837C330 864 280 884 250 875C225 865 212 840 207 808" />
        </g>
        <g clipPath="url(#rightClip)" stroke="#000" strokeWidth="2.500">
          <path d="M1237 495C1270 560 1300 650 1300 730C1298 800 1260 842 1195 842C1150 838 1105 815 1060 797V925L1095 932C1220 945 1340 995 1443 1065L1480 1060V500Z" fill="url(#lightwall)" stroke="none" />
          <path d="M1237 497C1270 560 1300 650 1300 730C1298 800 1260 842 1195 842C1150 838 1105 815 1060 797" />
          <path d="M1285 790C1268 822 1236 837 1195 837C1150 833 1105 809 1060 792" stroke="#e8e8e8" strokeWidth="6" />
          <path d="M1299 765C1280 806 1250 831 1195 831C1150 827 1105 804 1060 787" strokeWidth="2" />
          <path d="M1095 932C1220 945 1340 995 1443 1065" strokeWidth="4" />
          <path d="M1152 830L1170 945" />
        </g>

        <g clipPath="url(#bodyClip)" mask="url(#holes)">
          {FACETS.map((f, i) => (
            <path key={i} d={f.d} fill={f.c} />
          ))}
          <path d="M100 150V230L285 325C420 372 600 408 800 412C1000 412 1180 390 1290 340L1500 230V150Z" fill="url(#shoulder)" filter="url(#softer)" />
          <ellipse cx="790" cy="267" rx="396" ry="57" fill="#707070" filter="url(#soft)" />
          <path d="M34 1205C34 1379 378 1512 800 1512S1550 1379 1550 1205" stroke="#000" strokeWidth="3" />
        </g>
        <path d="M46 1146C37 1165 34 1185 34 1205C34 1379 378 1521 800 1521S1550 1379 1550 1205C1550 1185 1550 1165 1545 1150" stroke="#000" strokeWidth="3" />
        <path d="M250 505L300 345C318 285 350 262 400 248" stroke="#444" strokeWidth="1.500" strokeDasharray="2 9" />

        <path d={L_OUT + L_IN} fill="url(#rimL)" fillRule="evenodd" stroke="#000" strokeWidth="3" />
        <path d="M370 528C290 550 245 680 222 760C195 860 186 960 190 1040C192 1130 230 1210 310 1228" stroke="#000" strokeWidth="7" />
        <path d="M433 514L437 528" stroke="#000" strokeWidth="3" />
        <path d={R_OUT + R_IN} fill="url(#rimR)" fillRule="evenodd" stroke="#000" strokeWidth="3" />
        <path d="M1360 690C1410 820 1450 960 1450 1060C1448 1120 1430 1160 1395 1176" stroke="#ddd" strokeWidth="3" />
        <path d="M1290 508C1345 590 1420 860 1445 1010" stroke="#000" strokeWidth="6" />
        <path d="M1375 715C1400 790 1425 880 1440 970" stroke="#bbb" strokeWidth="1.500" strokeDasharray="5 4" />
        <path d="M1232 493L1240 506" stroke="#000" strokeWidth="3" />

        <path d="M594 226C594 250 560 252 560 267C560 286 663 300 790 300S1021 286 1021 267C1021 252 988 250 988 226Z" fill="url(#ring)" />
        <path d="M594 226C594 250 560 252 560 267C560 286 663 300 790 300S1021 286 1021 267C1021 252 988 250 988 226Z" fill="url(#capShade)" />
        <path d="M578 249C566 255 560 260 560 267C560 286 663 300 790 300S1021 286 1021 267C1021 260 1012 254 1000 249M988 226L1015 221" stroke="#000" strokeWidth="3" />
        <path d="M594 97V230C620 250 700 256 790 256S960 250 988 230V97Z" fill="url(#neck)" />
        <path d="M594 230C620 250 700 256 790 256S960 250 988 230" stroke="#000" strokeWidth="3" />
        <path d="M594 112V134" stroke="#333" strokeWidth="2" />
        <path d="M592 97C592 75 612 60 628 57L955 57C975 62 990 78 990 97C962 112 880 116 790 116S620 110 592 97Z" fill="url(#ring)" />
        <path d="M592 97C592 75 612 60 628 57L955 57C975 62 990 78 990 97C962 112 880 116 790 116S620 110 592 97Z" fill="url(#capShade)" />
        <path d="M990 97C962 112 880 116 790 116S620 110 592 97" stroke="#000" strokeWidth="3" />
        <ellipse cx="791" cy="58" rx="165" ry="15" fill="#787878" stroke="#000" strokeWidth="3" />
      </g>

      <g stroke="#555" strokeWidth="1.200">
        <path d="M36.500 763V793L59 799M36.500 793L18 799" />
        <g fill="#555" stroke="none" fontFamily="Liberation Sans, sans-serif" fontSize="12">
          <text x="39" y="765">z</text>
          <text x="61" y="801">y</text>
          <text x="19" y="801">x</text>
        </g>
      </g>
    </svg>
  );
}

/* ---------- small controls ---------- */

function Check({ id, label, on, filled, hideLabel, round }: { id: string; label: string; on?: boolean; filled?: boolean; hideLabel?: boolean; round?: boolean }) {
  return (
    <span className="flex items-center gap-1">
      <span className="relative grid size-[13px]">
        <input id={id} type="checkbox" aria-label={label} defaultChecked={on} className={`peer size-[13px] appearance-none border border-[#1c5180] bg-linear-to-br from-[#dcdcd7] to-white ${round ? "rounded-[3px]" : ""}`} />
        <svg viewBox="0 0 13 13" className="pointer-events-none absolute inset-0 hidden peer-checked:block">
          {filled ? <rect x="2" y="2" width="9" height="9" fill="#0c3c78" /> : <path d="M3 6l2.500 3L10 4" fill="none" stroke="#21a121" strokeWidth="2" />}
        </svg>
      </span>
      {!hideLabel && <label htmlFor={id}>{label}</label>}
    </span>
  );
}

const Chevron = ({ d }: { d: string }) => (
  <svg viewBox="0 0 10 10" className="size-2.5" fill="none" stroke="#3f5a94" strokeWidth="2">
    <path d={d} />
  </svg>
);

function ScrollButton({ label, d, className = "" }: { label: string; d: string; className?: string }) {
  return (
    <button type="button" aria-label={label} className={`grid shrink-0 place-items-center overflow-hidden rounded-xs border border-[#b3c6f7] bg-linear-to-b from-[#dbe5ff] to-[#b9ccfb] ${className}`}>
      <Chevron d={d} />
    </button>
  );
}

function PanelTitle({ title }: { title: string }) {
  return (
    <div className="flex h-[18px] items-center gap-1.5 bg-[#f4f3ee] pt-px pl-0.5 text-[#a09e92]">
      <h2 className="whitespace-nowrap">{title}</h2>
      <span aria-hidden className="h-1 flex-1 bg-[radial-gradient(circle,#a5a397_1px,transparent_1px)] bg-size-[4px_4px]" />
      <button type="button" aria-label={`Cerrar ${title}`} className="grid size-[13px] place-items-center border border-[#3a3a9a] bg-[#4a49a8]">
        <svg viewBox="0 0 10 10" className="size-2" stroke="#b9b7dd" strokeWidth="2"><path d="M1 1l8 8M9 1L1 9" /></svg>
      </button>
    </div>
  );
}

/* ---------- side panels ---------- */

const LAYER_TOOLS: [string, boolean, ReactNode][] = [
  ["Nueva capa", true, <path d="M4 2h5l3 3v9H4zM9 2v3h3" />],
  ["Duplicar", false, <path d="M2 2h6v9H2zM6 5h5l3 3v6H6z" />],
  ["Eliminar", false, <path d="M4 4l8 8M12 4l-8 8" />],
  ["Subir", false, <path d="M3 11l5-5 5 5z" fill="#8b897c" />],
  ["Bajar", false, <path d="M3 6l5 5 5-5z" fill="#8b897c" />],
  ["Anterior", false, <path d="M10 3L5 8l5 5z" fill="#8b897c" />],
  ["Filtrar", true, <path d="M3 3h11v2L9.500 9v5h-2V9L3 5z" />],
  ["Herramientas", true, <path d="M2 14l7-7M5 4l3-2q6 1 6 8l-3-3-2 1-3-3z" />],
  ["Ayuda", true, <path d="M5 6q0-3 3-3t3 2.500q0 2-3 3.500v2M8 12.500v1.500" strokeWidth="2" />],
];

const LAYERS = [
  ["Predeterminada", "bg-black"],
  ["Capa 01", "bg-[#f00]"],
  ["Capa 02", "bg-[#7b22c4]"],
  ["Capa 03", "bg-[#00f]"],
  ["Capa 04", "bg-[#0a7a0a]"],
  ["Capa 05", "bg-white"],
];

function LayersPanel() {
  return (
    <section className="flex flex-col pb-2">
      <PanelTitle title="Capas - Todas las capas" />
      <div className="flex h-6 items-center bg-[#ece9d8]">
        {LAYER_TOOLS.map(([name, active, art]) => (
          <button key={name} type="button" aria-label={name} className="grid h-5 w-[21px] place-items-center">
            <svg viewBox="0 0 16 16" className="size-3.5" fill="none" stroke={active ? "#111" : "#8b897c"} strokeWidth="1.300">{art}</svg>
          </button>
        ))}
      </div>
      <div className="flex h-[200px] flex-col border border-[#7f9db9] bg-white p-px">
        <table className="w-full table-fixed border-collapse text-left">
          <thead>
            <tr className="h-[20px] border-b-2 border-[#d6d2c2] bg-[#ece9d8]">
              <th className="w-[112px] pt-0.5 pl-2 font-normal">Nombre</th>
              {["Actual", "Visible", "Bloqueo", "Color", "Material"].map((h) => (
                <th key={h} aria-label={h} className="w-[17px]">
                  <span className="block h-3 border-l border-[#c2bfae]" />
                </th>
              ))}
            </tr>
          </thead>
          <tbody>
            {LAYERS.map(([name, color], i) => (
              <tr key={name} className={i === 0 ? "h-[15px] bg-[#f1f0f0] text-xs leading-[15px] font-bold" : "h-[15px] border-b border-dotted border-[#e6e4dc] leading-[14px]"}>
                <td className={i === 0 ? "pl-2 whitespace-nowrap" : "pl-[7px]"}>{name}</td>
                <td>
                  {i === 0 && <svg viewBox="0 0 12 12" className="ml-1 size-2.5" fill="none" stroke="#000" strokeWidth="2"><path d="M1 7l3 3 7-8" /></svg>}
                </td>
                <td>
                  {i > 0 && (
                    <svg viewBox="0 0 12 14" className="ml-1 h-[13px] w-2.5" fill="#ffff9c" stroke="#777722"><path d="M4 10Q1 7 1 5a5 4.500 0 0110 0q0 2-3 5z" /><path d="M4 10h4v3H4z" fill="#eee" /></svg>
                  )}
                </td>
                <td>
                  {i > 0 && (
                    <svg viewBox="0 0 12 14" className="ml-1 h-[13px] w-[11px]" fill="none" stroke="#111" strokeWidth="1.300"><path d="M1 7h7v6H1zM7 7V3q0-2 2-2t2 2v2" /></svg>
                  )}
                </td>
                <td><span className={`ml-1 block size-2.5 border border-black ${color}`} /></td>
                <td><span className="ml-1 block size-2.5 rounded-full border border-[#e8e6de] bg-white" /></td>
              </tr>
            ))}
          </tbody>
        </table>
        <div className="mt-auto flex h-4 bg-[#f6f5f0]">
          <ScrollButton label="Desplazar a la izquierda" d="M7 1L3 5l4 4" className="h-4 w-4" />
          <span className="grid w-[69px] place-items-center rounded-xs border border-[#98b0ec] bg-linear-to-b from-[#d0dffe] to-[#b4c9fa]">
            <span className="h-1.5 w-2 bg-[repeating-linear-gradient(to_right,#8faaec_0_1px,transparent_1px_2px)]" />
          </span>
          <span className="flex-1" />
          <ScrollButton label="Desplazar a la derecha" d="M3 1l4 4-4 4" className="h-4 w-4" />
        </div>
      </div>
    </section>
  );
}

type Row = { label: string; value?: string; kind?: "off" | "select" | "button" | "file" | "check" };
const SECTIONS: { title: string; rows: Row[] }[] = [
  { title: "Vista", rows: [{ label: "Título", value: "Perspectiva" }, { label: "Anchura", value: "1711", kind: "off" }, { label: "Altura", value: "828", kind: "off" }, { label: "Proyección", value: "Perspectiva", kind: "select" }] },
  { title: "Cámara", rows: [{ label: "Distancia focal", value: "50.0" }, { label: "Posición X", value: "227.055" }, { label: "Posición Y", value: "177.644" }, { label: "Posición Z", value: "120.619" }, { label: "Posición", value: "Colocar...", kind: "button" }] },
  { title: "Objetivo", rows: [{ label: "Objetivo X", value: "-5.099" }, { label: "Objetivo Y", value: "-8.471" }, { label: "Objetivo Z", value: "31.955" }, { label: "Posición", value: "Colocar...", kind: "button" }] },
  { title: "Papeltapiz", rows: [{ label: "NombreDeArch...", value: "(ninguno)", kind: "file" }, { label: "Mostrar", kind: "check" }, { label: "Gris", kind: "check" }] },
];

const XP_BUTTON = "rounded-[3px] border border-[#003c74] bg-linear-to-b from-white to-[#e4e1d6]";

function PropertyValue({ row, id }: { row: Row; id: string }) {
  if (row.kind === "button")
    return <button id={id} type="button" className={`block h-[17px] w-full leading-[15px] ${XP_BUTTON}`}>{row.value}</button>;
  if (row.kind === "select")
    return (
      <div className="relative flex">
        <select id={id} className="h-[17px] w-full appearance-none bg-white pl-[3px] outline-none"><option>{row.value}</option></select>
        <span className="pointer-events-none absolute top-0 right-0 grid h-[17px] w-[17px] place-items-center rounded-xs bg-[#c3d3fd]"><Chevron d="M1 3l4 4 4-4" /></span>
      </div>
    );
  if (row.kind === "file")
    return (
      <div className="flex">
        <input id={id} defaultValue={row.value} className="h-[17px] w-0 min-w-0 flex-1 pl-0.5 outline-none" />
        <button type="button" aria-label="Examinar" className={`h-[17px] w-[17px] leading-[11px] ${XP_BUTTON}`}>...</button>
      </div>
    );
  if (row.kind === "check") return <div className="pl-[3px]"><Check id={id} label={row.label} on hideLabel /></div>;
  return <input id={id} defaultValue={row.value} disabled={row.kind === "off"} className="block h-[17px] w-full bg-transparent pl-[3px] outline-none" />;
}

function PropertiesPanel() {
  return (
    <section className="flex flex-1 flex-col border-t border-[#a5a294]">
      <PanelTitle title="Propiedades" />
      <div className="flex-1 bg-[#ece9d8] pr-1">
        {SECTIONS.map((s, si) => (
          <div key={s.title}>
            <h3 className={si === 0 ? "flex h-[23px] items-start gap-1 pt-0.5 pl-1 text-[#0046d5] after:mt-2.5 after:h-px after:flex-1 after:bg-[#aca899]" : "flex h-[22px] items-center pl-[7px] text-[#0046d5]"}>{s.title}</h3>
            <table className="ml-3 w-[184px] table-fixed border-collapse">
              <tbody>
                {s.rows.map((row, ri) => {
                  const id = `prop-${si}-${ri}`;
                  const off = row.kind === "off";
                  return (
                    <tr key={ri} className={off ? "h-[19px] text-[#aca899]" : "h-[19px]"}>
                      <th scope="row" className="w-[89px] border-r border-b border-[#ece9d8] bg-white p-0 pl-1 text-left font-normal whitespace-nowrap"><label htmlFor={id}>{row.label}</label></th>
                      <td className={`border-b border-[#ece9d8] p-0 ${off ? "bg-[#ece9d8]" : "bg-white"}`}><PropertyValue row={row} id={id} /></td>
                    </tr>
                  );
                })}
              </tbody>
            </table>
          </div>
        ))}
      </div>
    </section>
  );
}

/* ---------- application marks ---------- */

const RhinoMark = ({ className }: { className: string }) => (
  <svg viewBox="0 0 16 16" className={className}>
    <rect width="16" height="16" fill="#000" />
    <path d="M1 3l3 1 1-3 2 4 2 1 6-2-4 4-1 4-2 3-2-3-1-3-3-2z" fill="#d4d4d4" />
    <path d="M5 5l4 3-1 3M2 4l3 3" stroke="#444" fill="none" />
  </svg>
);
const Buddy = ({ className }: { className: string }) => (
  <svg viewBox="0 0 16 16" className={className}>
    <circle cx="8" cy="4" r="3" fill="#a6e08a" />
    <path d="M3 16q-1-8 5-8t5 8z" fill="#7ccf5a" />
  </svg>
);
const Chat = () => (
  <svg viewBox="0 0 18 18" className="size-[17px]">
    <ellipse cx="13" cy="4.500" rx="4.500" ry="4" fill="#e6f1ff" />
    <circle cx="7" cy="8" r="3.500" fill="#b7e39e" />
    <path d="M2 18q-1-8 5-8t6 8z" fill="#8fce72" />
    <circle cx="6" cy="7" r="1" fill="#245" />
  </svg>
);
const Fox = () => (
  <svg viewBox="0 0 18 18" className="size-[17px]">
    <circle cx="9" cy="9" r="8" fill="#e8651a" />
    <circle cx="9.500" cy="7.500" r="5" fill="#3157a6" />
    <path d="M2 4l4 1q4 0 4 3l-3 2q3 3 7 0 3-3 2-7 3 9-4 13-7 2-10-4-1-4 0-8z" fill="#f7941e" />
  </svg>
);
const Globe = ({ className }: { className: string }) => (
  <svg viewBox="0 0 16 16" className={className}>
    <ellipse cx="7" cy="8" rx="6.500" ry="7.500" fill="#7f9a1e" />
    <ellipse cx="7" cy="7.500" rx="4.500" ry="5.500" fill="#174a3a" />
    <path d="M5 4q3 0 3 3t-3 2z" fill="#5fae4a" />
    <path d="M11 2q4 6 2 11l3 2h-5L7 15l4-3q2-5 0-10z" fill="#f0c31c" />
  </svg>
);

const TASKS: [ReactNode, string][] = [
  [<Chat />, "Luis - Conversación"],
  [<Chat />, "-\u2003 □ \u2003= Juanito Eli..."],
  [<Fox />, "Making Interior Scene..."],
  [<Fox />, "Gestionar Archivos A..."],
  [<Globe className="size-4" />, "JDownloader"],
  [<RhinoMark className="size-4" />, "Sin título - Rhinoceros..."],
];

const tag = (letter: string) => (
  <>
    <path d="M2 3l6-2 15 13-9 9L2 9z" fill="#dcb64a" stroke="#8a6a15" />
    <circle cx="6" cy="6" r="1.800" fill="#fff" stroke="#8a6a15" />
    <text x="13.500" y="17" fontSize="10" fontWeight="bold" textAnchor="middle" fill="#453808" fontFamily="Liberation Serif, serif">{letter}</text>
  </>
);

const QUICK: [string, ReactNode][] = [
  ["Material", tag("M")],
  ["Opciones", tag("O")],
  ["Frame", tag("F")],
  ["Cubo", <><path d="M4 7l8-3 8 3v9l-8 5-8-5z" fill="#6ea9de" stroke="#5b8dba" /><path d="M4 7l8-3 8 3-8 3z" fill="#b3d6f5" /><path d="M12 10l8-3v9l-8 5z" fill="#3f7db8" /></>],
  ["Estrella", <path d="M12 2v20M2 12h20M6 6l12 12M18 6L6 18" stroke="#f0a83a" strokeWidth="2.500" />],
  ["Plano", <path d="M1 11L11 1l12 11-10 11zM1 11l22 1M11 1l2 22" fill="#ececec" stroke="#666" />],
  ["V-Ray", <><ellipse cx="12" cy="12" rx="9" ry="9.500" fill="#eeeefc" stroke="#a9a9ec" strokeWidth="2" /><path d="M7 7l4 10 6-12" fill="none" stroke="#e0a83a" strokeWidth="2" /></>],
];

const MENU = ["Archivo", "Edición", "Vista", "Curva", "Superficie", "Sólido", "Malla", "Acotación", "Transformar", "Herramientas", "Análisis", "Renderizado", "V-Ray", "Ayuda"];
const SNAPS: [string, boolean][] = [["Fin", true], ["Cerca", false], ["Punto", true], ["Med", true], ["Cen", true], ["Int", true], ["Perp", true], ["Tan", true], ["Cuad", true], ["Nodo", false], ["Proyectar", false], ["STrack", true], ["Desactivar", false]];

const CAPTION = "grid size-5 place-items-center rounded-[3px] border border-[#b8c8f4]";

export default function App() {
  return (
    <div className='flex min-h-screen min-w-0 bg-white pt-[9px] pr-3.5 pb-3.5 pl-[9px] font-["Liberation_Sans",Arial,sans-serif] text-[11px] text-black'>
      <div className="flex min-w-0 flex-1 flex-col bg-[#ece9d8] shadow-[3px_4px_9px_rgba(0,0,0,0.6),0_0_8px_rgba(0,0,0,0.3)]">
        <header className="flex h-[26px] items-center gap-1 border-t border-[#6f86c8] bg-linear-to-b from-[#8fa9ea] via-[#7a97e0] to-[#7fa3ea] pr-[3px] pb-px pl-0.5">
          <RhinoMark className="size-4" />
          <h1 className="flex-1 text-[13px] font-bold text-[#dfe6fa]">Sin título - Rhinoceros (Corporativa) - [Perspectiva]</h1>
          <div className="flex gap-[3px]">
            <button type="button" aria-label="Minimizar" className={`${CAPTION} bg-[#3c63d8]`}><svg viewBox="0 0 20 20" className="size-[18px]"><path d="M4 13h7v3H4z" fill="#fff" /></svg></button>
            <button type="button" aria-label="Restaurar" className={`${CAPTION} bg-[#3c63d8]`}><svg viewBox="0 0 20 20" className="size-[18px]" fill="none" stroke="#fff" strokeWidth="1.500"><path d="M4 9h8v7H4zM4 10h8M8 8V4h8v8h-3" /></svg></button>
            <button type="button" aria-label="Cerrar" className={`${CAPTION} bg-[#b9586f]`}><svg viewBox="0 0 20 20" className="size-[18px]" stroke="#fff" strokeWidth="2.500"><path d="M4 4l12 12M16 4L4 16" /></svg></button>
          </div>
        </header>

        <nav className="flex h-5 items-center border-b border-[#aca899] text-[#a3a193]">
          {MENU.map((m) => (
            <button key={m} type="button" className="h-full px-[5px]">{m}</button>
          ))}
        </nav>

        <div className="flex h-[47px]">
          <div className="w-[205px] shrink-0 border-r border-[#a5a294]">
            <div className="flex h-8 items-center border-b border-[#a5a294] bg-[#f4f3ec]">
              <Grip className="mr-px ml-[3px] h-6" />
              {QUICK.map(([name, art]) => (
                <button key={name} type="button" aria-label={name} className="grid h-6 w-7 place-items-center">
                  <svg viewBox="0 0 24 24" className="size-6 bg-[#dcdcde] p-0.5">{art}</svg>
                </button>
              ))}
            </div>
          </div>
          <div className="flex min-w-0 flex-1 bg-[#f2f1ea]">
            <Grip className="mr-[3px] ml-0.5 w-[3px]" />
            <div className="min-w-0 flex-1 pr-0.5 text-xs">
              <div className="flex h-5 items-center justify-between border-b border-black bg-white">
                <output className="pt-0.5 whitespace-pre">{"Seleccione una opción ( Extensión  Selección  1x1 ): _Extents"}</output>
                <span className="flex w-4 flex-col gap-px">
                  <ScrollButton label="Línea anterior" d="M2 6l3-3 3 3" className="h-[8px]" />
                  <ScrollButton label="Línea siguiente" d="M2 4l3 3 3-3" className="h-[8px]" />
                </span>
              </div>
              <div className="flex h-[19px] items-center gap-0.5 bg-white">
                <label htmlFor="command" className="pb-0.5 font-bold">Comando:</label>
                <input id="command" className="h-full min-w-0 flex-1 outline-none" />
                <ScrollButton label="Historial" d="M2 4l3-3 3 3M2 6l3 3 3-3" className="h-4 w-3.5" />
                <ScrollButton label="Izquierda" d="M7 1L3 5l4 4" className="h-4 w-4" />
                <span className="h-4 w-1.5 rounded-xs bg-[#c3d3fd]" />
                <ScrollButton label="Derecha" d="M3 1l4 4-4 4" className="ml-0.5 h-4 w-4" />
                <span className="h-full w-4 bg-[#ece9d8]" />
              </div>
            </div>
          </div>
        </div>

        {ROWS.map((groups, i) => (
          <div key={i} role="toolbar" className="flex h-[29px] overflow-hidden border-t border-[#a5a294]">
            {groups.map((names, g) => (
              <ToolGroup key={g} names={names} />
            ))}
          </div>
        ))}

        <div className="flex flex-1">
          <aside className="flex w-[209px] shrink-0 flex-col bg-[#f4f3ee] pr-[7px] pb-0.5 pl-0.5">
            <LayersPanel />
            <PropertiesPanel />
          </aside>
          <main className="relative flex-1 overflow-hidden bg-[#9e9e9e]">
            <Scene />
            <h2 className="absolute top-0 left-0 h-[18px] bg-[#0053e4] px-2 text-[13px] leading-[17px] font-bold text-white">Perspectiva</h2>
            <div className="absolute top-10 left-[559px] flex h-[23px] w-[180px] items-center gap-2 bg-[#6c8ab5] pl-2.5 text-[#cdd6e4]">
              <svg viewBox="0 0 16 16" className="size-[15px]"><rect x="1" y="1" width="11" height="11" fill="#d9ae83" /><circle cx="11" cy="10" r="4" fill="#9aa6b8" /><path d="M4 15l4-4M13 15l-3-4" stroke="#d3dae4" strokeWidth="2" /></svg>
              <span className="pt-0.5">WinSnap</span>
            </div>
          </main>
        </div>

        <div className="flex h-[21px] border-b-2 border-[#a19e91]">
          <div className="flex items-center border-r border-[#a5a294] bg-[#efede0] pt-0.5">
            <Grip className="mr-[5px] ml-[3px] h-3" />
            {SNAPS.map(([name, on], i) => (
              <span key={name} className="w-[70px] whitespace-nowrap"><Check id={`snap-${name}`} label={name} on={on} filled={name === "STrack"} round={i > 9} /></span>
            ))}
            <span className="w-1" />
          </div>
        </div>

        <div className="flex h-[21px] items-center border-t border-white bg-linear-to-b from-[#f0eee2] to-[#e6e2cc] pt-px whitespace-nowrap">
          <span className="w-[55px] border-r border-white pl-2.5">PlanoC</span>
          <span className="w-[88px] pl-[5px]">x -350.53</span>
          <span className="w-[88px] pl-[5px]">y -496.92</span>
          <span className="w-[182px] pl-[5px]">z 0.00</span>
          <span className="flex w-[168px] items-center gap-px border-r border-white"><span className="size-3 bg-black" />Predeterminada</span>
          <div className="flex gap-0.5 pl-px font-bold">
            <button type="button" className="h-[18px] w-14 bg-[#f6f4ea]">Forzado</button>
            <button type="button" className="h-[18px] w-14 bg-[#f6f4ea]">Orto</button>
            <button type="button" className="h-[18px] w-14 font-normal">Planar</button>
            <button type="button" className="h-[18px] w-14 bg-[#f6f4ea]">RefObj</button>
            <button type="button" className="h-[18px] w-28 bg-[#f6f4ea]">Grabar historial</button>
          </div>
        </div>

        <footer className="flex h-[30px] items-center bg-linear-to-b from-[#2a5fd8] via-[#245edb] to-[#1f50c4] text-white shadow-[inset_0_2px_1px_#5a94f4]">
          <button type="button" className="mr-[11px] flex h-full w-[102px] items-center gap-1.5 rounded-r-lg bg-linear-to-b from-[#5fb85c] via-[#3a8f39] to-[#2f7f31] pl-2.5 text-base font-bold italic shadow-[inset_-3px_-2px_5px_#1d5c20]">
            <svg viewBox="0 0 18 18" className="size-[18px]"><path d="M2 4q3-3 6-1L7 8Q4 6 1 8z" fill="#f2622a" /><path d="M9 4q3 2 7-1l-1 5q-4 2-7 0z" fill="#8cc63e" /><path d="M1 9q3-2 6 0l-1 5q-3-2-6 0z" fill="#3f8cf0" /><path d="M8 10q3 2 7 0l-1 5q-4 2-7 0z" fill="#fcc62c" /></svg>
            Inicio
          </button>
          <div className="flex min-w-0 gap-0.5">
            {TASKS.map(([mark, name], i) => (
              <button key={i} type="button" className="flex h-[25px] w-[158px] min-w-0 items-center gap-1 rounded-xs bg-linear-to-b from-[#5a92fb] via-[#3c81f3] to-[#3a78ec] pl-2 whitespace-nowrap shadow-[inset_-1px_-1px_1px_#2456bd]">
                {mark}
                <span>{name}</span>
              </button>
            ))}
          </div>
          <span className="mr-[15px] ml-auto bg-[#3c68c8] px-1 py-0.5">ES</span>
          <div className="relative flex h-full w-32 items-center gap-[3px] border-l border-[#124a9c] bg-linear-to-b from-[#1cb0ee] via-[#1290e0] to-[#1499ec] pl-2.5">
            <button type="button" aria-label="Mostrar iconos ocultos" className="absolute top-[7px] -left-[9px] grid size-[17px] place-items-center rounded-full border border-[#8fc8f8] bg-[#2f8ae8]">
              <svg viewBox="0 0 10 10" className="size-2.5" fill="none" stroke="#fff" strokeWidth="2"><path d="M7 1L3 5l4 4" /></svg>
            </button>
            <Globe className="size-4" />
            <Buddy className="size-4" />
            <svg viewBox="0 0 16 16" className="size-4"><rect width="16" height="16" fill="#f2ecf8" stroke="#71379c" strokeWidth="2" /><path d="M4 4l5-1 3 3-2 6-4 1-2-5zM9 3l-3 10" fill="none" stroke="#5a2a86" /></svg>
            <svg viewBox="0 0 16 16" className="size-4"><path d="M1 5l7-4 7 2-2 7-8 2z" fill="#49505a" /><circle cx="5" cy="7" r="2.500" fill="#ddd" /><circle cx="12" cy="9" r="2.500" fill="#f0c89a" /><path d="M8 16q0-5 4-5t4 5z" fill="#a36f3c" /></svg>
            <time className="ml-1">12:17</time>
          </div>
        </footer>
      </div>
    </div>
  );
}
